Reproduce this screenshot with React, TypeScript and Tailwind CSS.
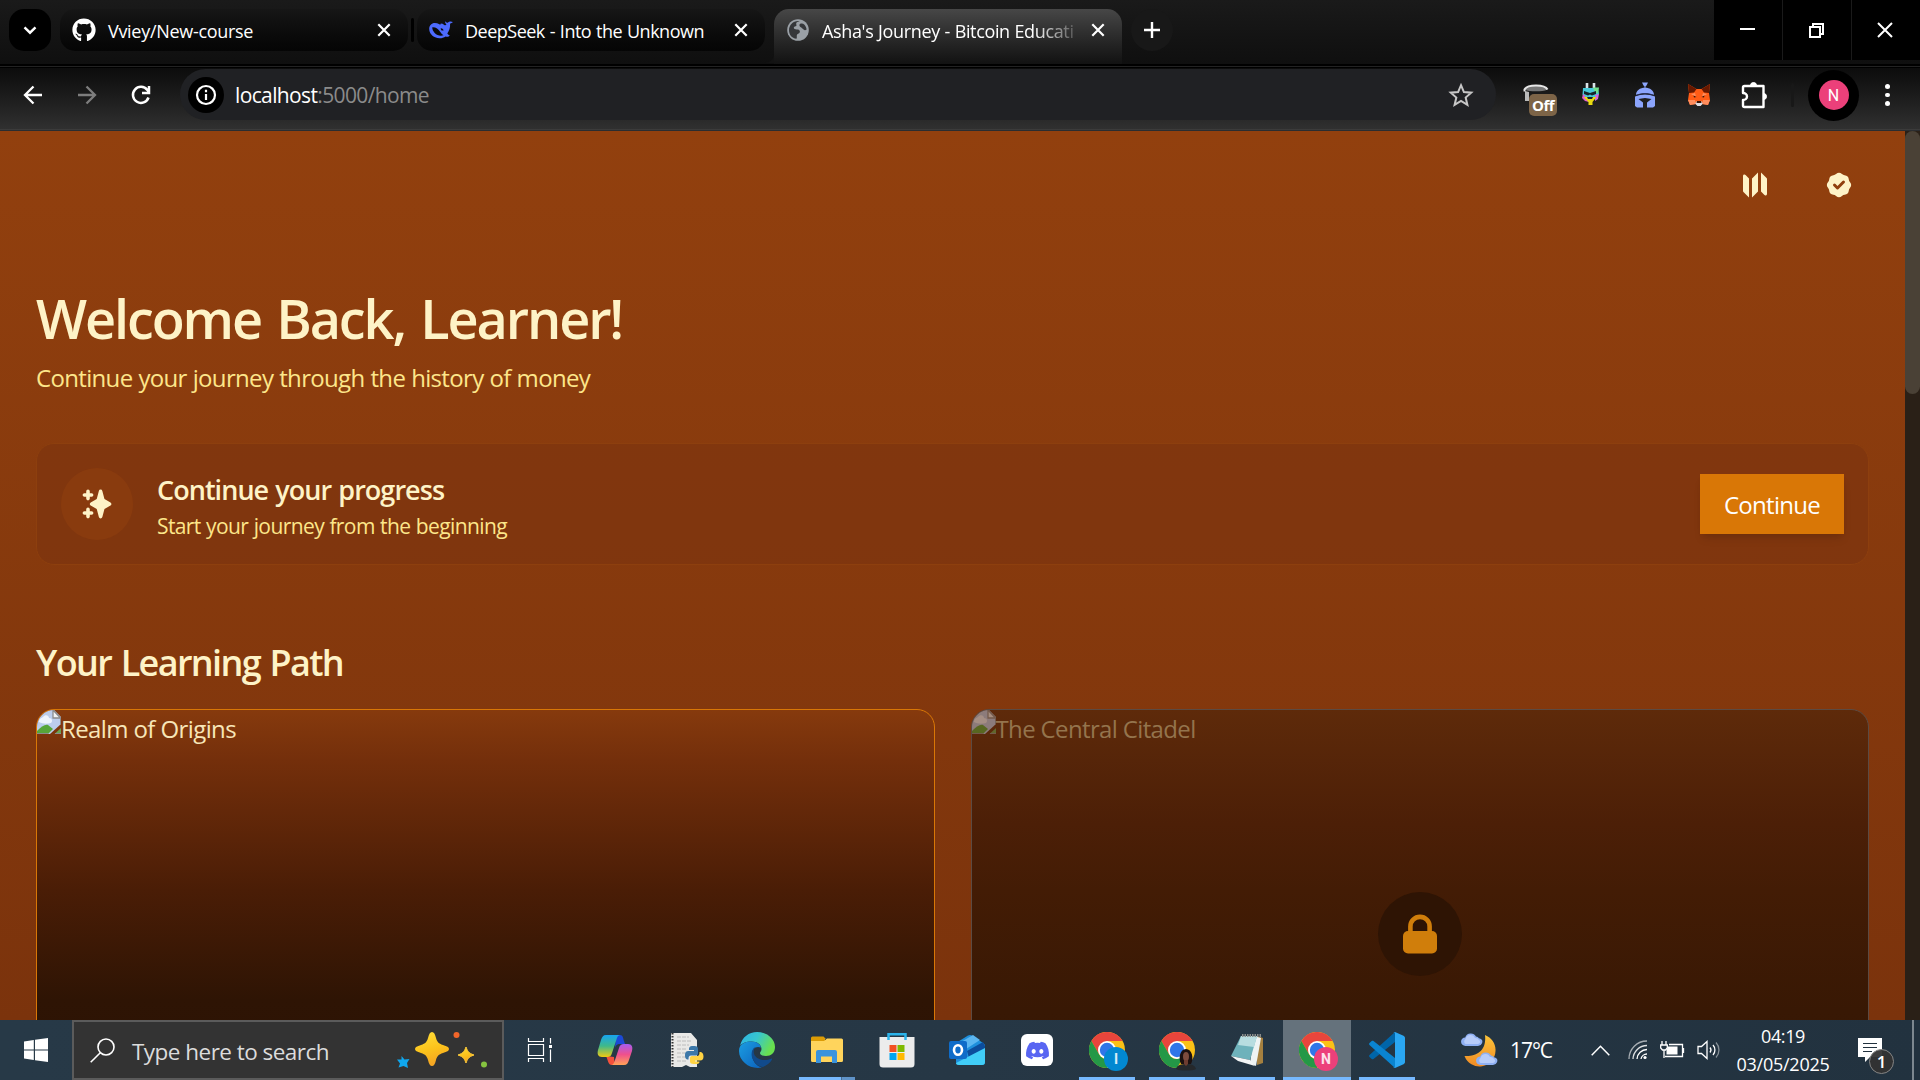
import React from "react";
import { FaGithub } from "react-icons/fa";
import { FaDiscord } from "react-icons/fa6";

type IconProps = { className?: string };

const CloseIcon = ({ className = "" }: IconProps) => (
  <svg className={className} width="24" height="24" viewBox="0 0 24 24" fill="none" stroke="#fff" strokeWidth="2.2">
    <path d="M6.3 6.3l11.4 11.4M17.7 6.3L6.3 17.7" />
  </svg>
);

const DeepSeekIcon = () => (
  <svg width="24" height="24" viewBox="0 0 24 24" fill="none">
    <path
      d="M23.7 4.1c-.5 1-1.500 1.400-2.300 1.500-.2 0-.3.1-.3.3.2 3.500-.8 6.700-2.800 9.600.7.9 1.500 1.500 2.500 1.900-.9 1.300-2.600 1.700-4.200 1-2.800 2-6.900 2.500-10.500.8C1.500 17 .1 13.500.2 9.900c.4-2 1.500-3.700 3.300-4.500 2.300-.9 4.700-.3 6.900.9.8.5 1.500 0 1.300-.8 1.300 0 2.500.5 3.600 1.400.8.6 1.700.4 2.200-.4-1-.8-1.500-2-1.300-3.300.6.900 1.400 1.500 2.500 1.600.8-.8 1.900-1.300 3.100-1.300.7 0 1.200.3 1.900.6z"
      fill="#4d6bfe"
    />
    <path d="M3.300 9.300c3.400-.3 5.900 1.700 8 4.700 1 1.500 2 2.600 3.200 3.300-3.100 1-6.500.1-8.800-2.300-1.600-1.700-2.500-3.700-2.400-5.700z" fill="#0a0a0a" />
    <path d="M11.600 10.200c1.200-.3 2.500.5 3 2.200-.8.4-2 .2-2.500-.4z" fill="#0a0a0a" />
  </svg>
);

const GlobeIcon = () => (
  <svg width="24" height="24" viewBox="0 0 24 24">
    <circle cx="12" cy="12" r="10.800" fill="#9aa0a6" />
    <path
      d="M13.800 3.300c-2.800.2-4 1.700-3.500 3.200.6 1.500-.4 1.700-1.500 2.100-1.300.5-1.300 1.800-.3 2.300 1.300.6 3.200.1 4.300.9 1.200.9 1.500 2.100.6 3.200-.9 1-2.500 1-2.600 2.500-.1 1 .3 2.300-.3 3.300C5.700 20.200 3 16.500 3 12.200 3 7.200 7 3 12 3zM14.200 5.800c1.500-.6 3-.3 4 .6 1.200 1.200 2.200 3 2.400 5-1.200 1.200-2.800.8-3.600-.3-.7-1-2-1.400-2.900-2.300-.9-.9-.9-2.400.1-3z"
      fill="#35373a"
    />
  </svg>
);

function Tab({ icon, title, className, titleClass }: { icon: React.ReactNode; title: string; className: string; titleClass: string }) {
  return (
    <div className={`flex h-[42px] w-[348px] shrink-0 items-center pl-3 ${className}`}>
      <span className="flex w-9 shrink-0">{icon}</span>
      <span className={`w-[252px] pt-[2px] text-[18px] leading-[26px] whitespace-nowrap text-white ${titleClass}`}>{title}</span>
      <CloseIcon className="ml-3 shrink-0" />
    </div>
  );
}

function TabStrip() {
  return (
    <div className="flex h-[64px] items-start bg-linear-to-b from-[#1a1a1a] to-[#0f0f0f]">
      <div className="mt-[9px] ml-[9px] flex h-[42px] w-[42px] items-center justify-center rounded-[15px] bg-black">
        <svg width="24" height="24" viewBox="0 0 24 24" fill="none" stroke="#fff" strokeWidth="2.400">
          <path d="M6.500 9.300l5.500 5.400 5.500-5.400" />
        </svg>
      </div>
      <Tab
        className="mt-[9px] ml-[9px] rounded-[15px] bg-linear-to-b from-[#161616] to-[#050505]"
        icon={<FaGithub className="h-6 w-6 text-white" />}
        title="Vviey/New-course"
        titleClass="tracking-[-0.3px]"
      />
      <div className="mt-[18px] ml-[3px] h-6 w-[3px] rounded bg-black" />
      <Tab
        className="mt-[9px] ml-[3px] rounded-[15px] bg-linear-to-b from-[#161616] to-[#050505]"
        icon={<DeepSeekIcon />}
        title="DeepSeek - Into the Unknown"
        titleClass="tracking-[-0.5px] [word-spacing:0.7px]"
      />
      <div className="mt-[9px] flex items-end">
        <svg width="9" height="9" viewBox="0 0 9 9" className="mb-[1px]">
          <path d="M9 0v9H0A9 9 0 0 0 9 0z" fill="#131313" />
        </svg>
        <div className="h-[55px] rounded-t-[15px] bg-linear-to-b from-[#474747] to-[#121212]">
          <Tab
            className=""
            icon={<GlobeIcon />}
            title="Asha's Journey - Bitcoin Educati"
            titleClass="tracking-[-0.36px] [word-spacing:0.4px] [mask-image:linear-gradient(to_right,#000_84%,rgba(0,0,0,0.2)_100%)]"
          />
        </div>
      </div>
      <div className="mt-[9px] ml-[9px] flex h-[42px] w-[42px] items-center justify-center rounded-full bg-[#181818]">
        <svg width="24" height="24" viewBox="0 0 24 24" stroke="#fff" strokeWidth="2.400">
          <path d="M12 4v16M4 12h16" />
        </svg>
      </div>
      <div className="ml-auto flex h-[60px] gap-px bg-[#1a1a1a]">
        <div className="flex w-[68px] items-center justify-center bg-black pr-[2px]">
          <div className="mt-[-2px] h-[2px] w-[15px] bg-white" />
        </div>
        <div className="flex w-[68px] items-center justify-center bg-black pr-[2px]">
          <svg width="15" height="15" viewBox="0 0 15 15" fill="none" stroke="#fff" strokeWidth="2">
            <path d="M1 4h10v10H1zM4 4V1h10v10h-3" />
          </svg>
        </div>
        <div className="flex w-[68px] items-center justify-center bg-black pr-[2px]">
          <svg width="16" height="16" viewBox="0 0 16 16" fill="none" stroke="#fff" strokeWidth="2">
            <path d="M1 1l14 14M15 1L1 15" />
          </svg>
        </div>
      </div>
    </div>
  );
}

function Toolbar() {
  return (
    <div className="flex h-[67px] flex-col border-b border-[#2b2d30] bg-[#0a0a0a]">
      <div className="h-[2px] bg-black" />
      <div className="h-px bg-[#222]" />
      <div className="h-px bg-black" />
      <div className="flex h-[62px] items-start border-b border-[#3b3b3b] bg-linear-to-b from-[#0c0c0c] to-[#303030] pt-px">
        <div className="flex h-[52px] w-[180px] items-center pl-[21px]">
          <svg width="24" height="24" viewBox="0 0 24 24" fill="none" stroke="#fff" strokeWidth="2.300">
            <path d="M21 12H4.500M12.500 3.500L4 12l8.500 8.500" />
          </svg>
          <svg className="ml-[30px]" width="24" height="24" viewBox="0 0 24 24" fill="none" stroke="#7d7d7d" strokeWidth="2.300">
            <path d="M3 12h16.500M11.500 3.500L20 12l-8.500 8.500" />
          </svg>
          <svg className="ml-[30px]" width="24" height="24" viewBox="0 0 24 24" fill="none" stroke="#fff" strokeWidth="2.500">
            <path d="M19.500 14.500A8 8 0 1 1 18.300 7L20 9M20 3v7h-7" />
          </svg>
        </div>
        <div className="flex h-[51px] w-[1316px] items-center rounded-full bg-[#202124] pl-[8px]">
          <div className="flex h-9 w-9 items-center justify-center rounded-full bg-black">
            <svg width="24" height="24" viewBox="0 0 24 24" fill="none" stroke="#fff" strokeWidth="2.200">
              <circle cx="12" cy="12" r="9" />
              <path d="M12 11v6M12 6.800v2.400" />
            </svg>
          </div>
          <span className="ml-[11px] text-[21px] leading-7 tracking-[-0.63px] text-white">
            localhost<span className="text-[#8b8b8b]">:5000/home</span>
          </span>
          <svg className="mr-[21px] ml-auto" width="28" height="28" viewBox="0 0 24 24" fill="none" stroke="#c7c7c7" strokeWidth="1.700">
            <path d="M12 3.600l2.500 5.900 6.300.5-4.800 4.200 1.500 6.300-5.500-3.400-5.500 3.400L8 14.200 3.200 10l6.300-.5z" />
          </svg>
        </div>
        <div className="flex h-[52px] items-center">
          <div className="relative ml-[27px] h-7 w-9">
            <svg width="28" height="28" viewBox="0 0 28 28" fill="none">
              <path d="M2 10v10h4v-9z" fill="#b9b9b9" />
              <path d="M1.500 8.500C3 5.500 8 4.500 13 4.500s10 1 11.500 4c-3 1.500-7 1.800-11.500 1.800S4 10 1.500 8.500z" fill="#777" />
              <path d="M1.500 10.500V8.500C3 5.500 8 4.500 13 4.500s10 1 11.500 4" stroke="#e8e8e8" strokeWidth="2" />
            </svg>
            <span className="absolute top-[13px] left-[6px] flex h-[22px] w-[28px] items-center justify-center rounded-[5px] bg-[#7d6447] text-[15px] font-bold tracking-[-0.5px] text-white">
              Off
            </span>
          </div>
          <svg className="ml-[22px]" width="20" height="24" viewBox="0 0 20 24">
            <path d="M6 0v6M13 0v6" stroke="#d9e3e8" strokeWidth="2.600" />
            <path d="M2 5h15l1 6-4 5H5l-3.500-4z" fill="#46c9d8" />
            <path d="M2 11l4 4 2 4-4-1-3-3z" fill="#e15ad0" />
            <path d="M12 4.500h6l-1 6-3-1z" fill="#6fe08b" />
            <path d="M14 12l4-1-1 5-3 2z" fill="#d267e0" />
            <path d="M2.500 14h13l-4 5v3h-4v-3z" fill="#e8d911" />
            <path d="M3 8l6 2 6-2v3l-4 1.500-2-1-2 1-4-1.500zM6 14h6l-1 2H7z" fill="#16232b" />
          </svg>
          <svg className="ml-[33px]" width="22" height="26" viewBox="0 0 22 26" fill="#8ba4fb">
            <path d="M8 .5h6l-1.500 3-1 1v2h-1v-2l-1-1z" />
            <path d="M2 13C2 8.500 6 5.800 11 5.800S20 8.500 20 13c-3-1.300-6-1.800-9-1.800S5 11.700 2 13z" />
            <path d="M1 14.500c6.500-2.700 13.500-2.700 20 0V24l-2 1.500h-6v-5l4.500-3.500-6.500-1-6.500 1L9 20.500v5H3L1 24z" />
            <path d="M2 13.300c6-2.200 12-2.200 18 0" stroke="#26305c" strokeWidth=".8" fill="none" />
          </svg>
          <svg className="ml-[31px]" width="24" height="24" viewBox="0 0 24 24">
            <path d="M1 1l8.500 5h5L23 1l-1 9 1 7-2 5-6-1-1.500 2h-3L9 21l-6 1-2-5 1-7z" fill="#ff5c16" />
            <path d="M1 1l8.500 5-2.500 3.500L2 10zM23 1l-8.500 5 2.500 3.500 5 .5z" fill="#661800" />
            <path d="M1 17h7l1 4-6 1zM23 17h-7l-1 4 6 1zM4 11l4-1 1 4zM20 11l-4-1-1 4z" fill="#ff8d5d" />
            <path d="M9 18.500h6l.5 2.500-2 2h-3l-2-2z" fill="#d8dde4" />
            <path d="M6.500 12.500l3 1.500-2.500.5zM17.500 12.500l-3 1.500 2.500.5zM10 18h4l.5 2h-5z" fill="#3a1206" />
          </svg>
          <svg className="ml-[30px]" width="27" height="28" viewBox="0 0 27 28" fill="none">
            <path
              d="M3.500 5h19v21h-19a1.500 1.500 0 0 1-1.500-1.500V19c2 0 4-1.200 4-3.500S4 12 2 12V6.500A1.500 1.500 0 0 1 3.500 5z"
              stroke="#fff"
              strokeWidth="2.400"
              strokeLinejoin="round"
            />
            <path d="M9.500 4.500a3 3 0 0 1 6 0zM22.500 12.500a3 3 0 0 1 0 6z" fill="#fff" stroke="#fff" />
          </svg>
          <div className="ml-[23px] h-6 w-[3px] rounded bg-[#181818]" />
          <div className="ml-[14px] flex h-[51px] w-[51px] items-center justify-center rounded-full bg-black">
            <div className="flex h-[30px] w-[30px] items-center justify-center rounded-full bg-[#ec407a] pt-px font-[Roboto] text-[16px] text-white">N</div>
          </div>
          <div className="ml-[26px] flex flex-col gap-1">
            <i className="h-[4.5px] w-[4.5px] rounded-full bg-white" />
            <i className="h-[4.5px] w-[4.5px] rounded-full bg-white" />
            <i className="h-[4.5px] w-[4.5px] rounded-full bg-white" />
          </div>
        </div>
      </div>
    </div>
  );
}

const BrokenImage = () => (
  <svg width="24" height="24" viewBox="0 0 24 24" className="shrink-0">
    <path d="M0 0h17l7 7v7L13 24H0z" fill="#bccdec" />
    <path d="M2 12c0-4 3-4 4-5 2-3 6-2 6 1 3 0 4 3 2 5-4 1-8 1-12-1z" fill="#eef4fd" />
    <path d="M16 0l7.500 8H16z" fill="#f2f2f2" stroke="#8b8b8b" strokeWidth="1.300" />
    <path d="M0 24v-3c4-4 8-7 11-6l5 4-5 5z" fill="#57a639" />
    <path d="M17.500 24l6.500-6v6z" fill="#69a551" />
    <path d="M0 23.500h11M18 23.500h6M23.500 8v6" stroke="#8c8c8c" />
  </svg>
);

function Page() {
  return (
    <div className="flex h-[889px] overflow-hidden">
      <main className="h-full w-[1905px] bg-linear-to-b from-[#92400e] to-[#7b330c] px-9">
        <nav className="flex justify-end gap-[54px] pt-[39px] pr-[15px]">
          <svg width="30" height="30" viewBox="0 0 20 20" fill="#fef3c7">
            <path d="M12 1.586l-4 4v12.828l4-4V1.586zM3.707 3.293A1 1 0 002 4v10a1 1 0 00.293.707L6 18.414V5.586L3.707 3.293zM17.707 5.293L14 1.586v12.828l2.293 2.293A1 1 0 0018 16V6a1 1 0 00-.293-.707z" />
          </svg>
          <svg width="30" height="30" viewBox="0 0 20 20" fill="#fef3c7">
            <path
              fillRule="evenodd"
              clipRule="evenodd"
              d="M6.267 3.455a3.066 3.066 0 001.745-.723 3.066 3.066 0 013.976 0 3.066 3.066 0 001.745.723 3.066 3.066 0 012.812 2.812c.051.643.304 1.254.723 1.745a3.066 3.066 0 010 3.976 3.066 3.066 0 00-.723 1.745 3.066 3.066 0 01-2.812 2.812 3.066 3.066 0 00-1.745.723 3.066 3.066 0 01-3.976 0 3.066 3.066 0 00-1.745-.723 3.066 3.066 0 01-2.812-2.812 3.066 3.066 0 00-.723-1.745 3.066 3.066 0 010-3.976 3.066 3.066 0 00.723-1.745 3.066 3.066 0 012.812-2.812zm7.440 5.252a1 1 0 00-1.414-1.414L9 10.586 7.707 9.293a1 1 0 00-1.414 1.414l2 2a1 1 0 001.414 0l4-4z"
            />
          </svg>
        </nav>
        <h1 className="mt-[88px] text-[54px] leading-[60px] font-semibold tracking-[-2.1px] whitespace-nowrap text-[#fef3c7] [word-spacing:3.300px]">
          Welcome Back, Learner!
        </h1>
        <p className="mt-3 text-[24px] leading-9 tracking-[-0.67px] text-[#fde68a] [word-spacing:0.4px]">Continue your journey through the history of money</p>
        <section className="mt-[47px] flex h-[122px] items-center justify-between rounded-[18px] border border-[#8d3f0e] bg-[#7c340f]/60 px-6">
          <div className="flex items-center gap-6">
            <div className="flex h-[72px] w-[72px] items-center justify-center rounded-full bg-[#92400e]/50">
              <svg width="36" height="36" viewBox="0 0 20 20" fill="#fef3c7">
                <path
                  fillRule="evenodd"
                  clipRule="evenodd"
                  d="M5 2a1 1 0 011 1v1h1a1 1 0 010 2H6v1a1 1 0 01-2 0V6H3a1 1 0 010-2h1V3a1 1 0 011-1zm0 10a1 1 0 011 1v1h1a1 1 0 110 2H6v1a1 1 0 11-2 0v-1H3a1 1 0 110-2h1v-1a1 1 0 011-1zM12 2a1 1 0 01.967.744L14.146 7.200 17.500 9.134a1 1 0 010 1.732l-3.354 1.935-1.180 4.455a1 1 0 01-1.933 0L9.854 12.800 6.500 10.866a1 1 0 010-1.732l3.354-1.935 1.180-4.455A1 1 0 0112 2z"
                />
              </svg>
            </div>
            <div className="pt-[2px]">
              <h3 className="text-[27px] leading-[42px] font-semibold tracking-[-0.95px] text-[#fef3c7] [word-spacing:1px]">Continue your progress</h3>
              <p className="text-[21px] leading-[30px] tracking-[-0.6px] text-[#fde68a] [word-spacing:0.500px]">Start your journey from the beginning</p>
            </div>
          </div>
          <button className="h-[60px] w-36 bg-[#d97706] pt-[2px] text-[24px] tracking-[-0.7px] text-white shadow-[0_6px_9px_-1.500px_rgba(0,0,0,0.1),0_3px_6px_-3px_rgba(0,0,0,0.1)]">
            Continue
          </button>
        </section>
        <h2 className="mt-[74px] text-[36px] leading-[48px] font-semibold tracking-[-1.64px] text-[#fef3c7] [word-spacing:1.800px]">Your Learning Path</h2>
        <div className="mt-[22px] grid grid-cols-2 gap-9">
          <article className="h-[450px] overflow-hidden rounded-[18px] border border-[#d97706] bg-[linear-gradient(to_bottom,#863a0d_0px,#742f0b_50px,#4a1d06_180px,#2e1404_290px,#2a1203_450px)]">
            <div className="flex text-[24px] leading-[38px] tracking-[-0.6px] text-[#f7e6b8]">
              <BrokenImage />
              Realm of Origins
            </div>
          </article>
          <article className="relative h-[450px] overflow-hidden rounded-[18px] border border-[#5c4a42] bg-[linear-gradient(to_bottom,#5e2a0a_0px,#4c1f07_114px,#431c05_180px,#381804_300px,#341603_450px)]">
            <div className="flex text-[24px] leading-[38px] tracking-[-0.64px] text-[#94744d]">
              <span className="opacity-50">
                <BrokenImage />
              </span>
              The Central Citadel
            </div>
            <div className="absolute inset-0 flex items-center justify-center">
              <div className="flex h-[84px] w-[84px] items-center justify-center rounded-full bg-[#2e1404]">
                <svg width="48" height="48" viewBox="0 0 48 48" fill="none">
                  <path d="M14.400 22v-5.500a9.600 9.600 0 0 1 19.200 0V22" stroke="#d07e0b" strokeWidth="4.600" />
                  <rect x="7" y="21" width="34" height="22.500" rx="5" fill="#d07e0b" />
                </svg>
              </div>
            </div>
          </article>
        </div>
      </main>
      <div className="h-full w-[15px] bg-[#2a2017]">
        <div className="h-[263px] w-full rounded-full bg-[#4a4136]" />
      </div>
    </div>
  );
}

const TaskViewIcon = () => (
  <svg width="26" height="26" viewBox="0 0 26 26" fill="none" stroke="#fff" strokeWidth="1.200">
    <path d="M1.500 1v3.500h15V1M1.500 25v-3.500h15V25M1.500 7.500h15v11h-15zM23.500 1v5.500M23.500 12.500V25" />
    <path d="M22 8h3v3h-3z" fill="#fff" stroke="none" />
  </svg>
);

const CopilotIcon = () => (
  <svg width="36" height="32" viewBox="0 0 36 32">
    <defs>
      <linearGradient id="cpA" x1="0" y1="0" x2="0" y2="1">
        <stop offset="0" stopColor="#17a4f0" />
        <stop offset=".5" stopColor="#3fb98a" />
        <stop offset="1" stopColor="#f0cb12" />
      </linearGradient>
      <linearGradient id="cpB" x1="0" y1="0" x2="0" y2="1">
        <stop offset="0" stopColor="#a55cf0" />
        <stop offset=".5" stopColor="#f0508c" />
        <stop offset="1" stopColor="#ffa357" />
      </linearGradient>
    </defs>
    <path d="M19 1h4c3 0 3 3 4 6l1 3h-6c-3 0-4 4-4 4z" fill="#1b49d6" />
    <path d="M9 22l8 1c0 4 1 7 3 8h-5c-4 0-4-5-6-9z" fill="#f4513c" />
    <path d="M9 1h14c-2 0-3 2-4 6l-4 12c-1 3-2 4-5 4H5c-4 0-5-3-4-7L4 6c1-3 2-5 5-5z" fill="url(#cpA)" />
    <path d="M27 31H14c2 0 3-2 4-5l4-12c1-3 2-4 5-4h4c4 0 5 3 4 7l-3 9c-1 3-2 5-5 5z" fill="url(#cpB)" />
  </svg>
);

const PythonNoteIcon = () => (
  <svg width="34" height="36" viewBox="0 0 34 36">
    <path d="M1 1h20l6 7v27h-7l-4-2-4 2H1z" fill="#e9e9e7" />
    <path d="M2.500 1v34" stroke="#333" strokeWidth="2" strokeDasharray="1.500 1.500" />
    <path d="M7 5h12M7 9h14M7 13h12M7 17h9M7 21h8M7 25h10M7 29h10" stroke="#bcbcbc" strokeDasharray="4 1" />
    <path d="M23 14c5 0 5 1 5 4v3c0 2-1 2.500-3 2.500h-4c-2 0-2.500 1-2.500 4-3 0-3.500-2-3.500-4.500s1-4 3.500-4H24v-1h-5c0-3 .5-4 4-4z" fill="#3c78a9" />
    <path d="M25 32c-5 0-5-1-5-4v-2c0-1.500 1-2 3-2h4c2 0 2.500-1.500 2.500-4 3 0 4 2 4 4.500s-1 4-3.500 4H25v1h4.500c0 2-1 2.500-4.500 2.500z" fill="#ffd343" />
  </svg>
);

const EdgeIcon = () => (
  <svg width="36" height="36" viewBox="0 0 36 36">
    <defs>
      <linearGradient id="edA" x1="0" y1="0" x2="1" y2=".4">
        <stop offset="0" stopColor="#2bb2e8" />
        <stop offset=".5" stopColor="#37c6cf" />
        <stop offset="1" stopColor="#69e04e" />
      </linearGradient>
      <linearGradient id="edB" x1="0" y1="0" x2="1" y2="1">
        <stop offset="0" stopColor="#1b9de2" />
        <stop offset="1" stopColor="#0c62bd" />
      </linearGradient>
    </defs>
    <path d="M1 14C3 5 10 0 18 0c10 0 18 7 18 15 0 6-4 9-9 9-4 0-6-1.500-6-3 0-1 1.500-1.500 1.500-4 0-4-4-7.500-10-7.500C7 9.500 2.500 11.500 1 14z" fill="url(#edA)" />
    <path d="M0 19C0 12 6 9.500 12 9.500c6 0 9.500 3 10 6-6-2-9 2-9 7 0 6 4 11.500 10 13C12 38 0 30 0 19z" fill="url(#edB)" />
    <path d="M16 15c-3 2-4.500 7-2.500 11.500S20 35 24 35c4-1.500 7.500-4.500 9-7.500.3-.8-.3-1.200-1-.8-6 3-15 1-17-5-.6-2-.3-4.500 1-6.700z" fill="#114a8b" />
  </svg>
);

const ExplorerIcon = () => (
  <svg width="32" height="28" viewBox="0 0 32 28">
    <path d="M0 2a1.500 1.500 0 0 1 1.500-1.500h11L15 3h-1v4H0z" fill="#dc9c05" />
    <path d="M0 5h13l3-2.500h14.500A1.500 1.500 0 0 1 32 4v20.500a1.500 1.500 0 0 1-1.500 1.500h-29A1.500 1.500 0 0 1 0 24.500z" fill="#ffd45c" />
    <path d="M5 16a2 2 0 0 1 2-2h17a2 2 0 0 1 2 2v11h-5v-6.500H10V27H5z" fill="#3a93dd" />
  </svg>
);

const StoreIcon = () => (
  <svg width="36" height="36" viewBox="0 0 36 36">
    <path d="M9.500 6V2.200h17V6" fill="none" stroke="#2bb3ea" strokeWidth="2.500" />
    <path d="M.5 5h35v27a3.500 3.500 0 0 1-3.500 3.500H4A3.500 3.500 0 0 1 .5 32z" fill="#ececec" />
    <path d="M9.500 5v3M26.500 5v3" stroke="#2bb3ea" strokeWidth="2.500" />
    <path d="M10.500 13h7v7h-7z" fill="#f25022" />
    <path d="M18.500 13h7v7h-7z" fill="#7fba00" />
    <path d="M10.500 21h7v7h-7z" fill="#00a4ef" />
    <path d="M18.500 21h7v7h-7z" fill="#ffb900" />
  </svg>
);

const OutlookIcon = () => (
  <svg width="36" height="32" viewBox="0 0 36 32">
    <path d="M7 9L19 1.500c1.500-.8 2.500-.8 4 0L34 9c1.500 1 2 2 2 3v16a3 3 0 0 1-3 3H10a3 3 0 0 1-3-3z" fill="#1e8fdc" />
    <path d="M18 17L34 8l2 4v3L20 24z" fill="#0c4d9c" />
    <path d="M12 8l12-7 7 5-14 9z" fill="#5bb6f0" />
    <path d="M36 14v14a3 3 0 0 1-3 3H10c-2 0-3-1-3-2z" fill="#41cdf7" />
    <rect x="0" y="7" width="18" height="18" rx="2" fill="#0f6cc9" />
    <ellipse cx="9" cy="16" rx="4" ry="4.700" fill="none" stroke="#fff" strokeWidth="2.600" />
  </svg>
);

const ChromeIcon = () => (
  <svg width="36" height="36" viewBox="0 0 36 36">
    <circle cx="18" cy="18" r="18" fill="#fbc116" />
    <path d="M18 9h15.600A18 18 0 0 0 2.400 9l7.800 13.500z" fill="#e8453c" />
    <path d="M2.400 9a18 18 0 0 0 15.600 27l7.800-13.500L18 27a9 9 0 0 1-7.800-4.500z" fill="#249847" />
    <circle cx="18" cy="18" r="9" fill="#fff" />
    <circle cx="18" cy="18" r="7.200" fill="#2f76e8" />
  </svg>
);

const NotepadIcon = () => (
  <svg width="34" height="34" viewBox="0 0 34 34">
    <path d="M27 3l6 2v25l-6 2z" fill="#a5803f" />
    <path d="M24 3l7 2-5 28-6-3z" fill="#eef3f3" />
    <path d="M11 3l16 0-7 24L1 23z" fill="#6eb2bb" />
    <path d="M11 3l16 0-3 11-16-2z" fill="#b8dde0" />
    <path d="M1 23l19 4 5 6-17-5z" fill="#f4f6f6" />
    <path d="M12 2.500h19" stroke="#8a8d8a" strokeWidth="3" strokeDasharray="1.500 1" />
  </svg>
);

const VSCodeIcon = () => (
  <svg width="36" height="36" viewBox="0 0 36 36">
    <path d="M26 0v10L4.500 27c-.6.500-1.300.4-1.800 0L.5 25c-.6-.6-.6-1.500 0-2z" fill="#0065a9" />
    <path d="M26 36V26L4.500 9c-.6-.5-1.300-.4-1.800 0L.5 11c-.6.600-.6 1.500 0 2z" fill="#0a84d0" />
    <path d="M26 36c-1 .2-1.600 0-2.200-.6.900.8 2.200.2 2.200-1V1.600c0-1.200-1.300-1.800-2.200-1C24.400 0 25 0 26 0l8.500 3.800c.9.500 1.500 1.200 1.500 2.200v24c0 1-.6 1.700-1.500 2.200z" fill="#2aa7f3" />
  </svg>
);

function Slot({ children, running = false, active = false }: { children: React.ReactNode; running?: boolean; active?: boolean }) {
  return (
    <div className="flex h-[60px] w-[70px] flex-col items-center">
      <div className={`flex h-[57px] w-[68px] items-center justify-center pt-[3px] ${active ? "bg-[#65727c]" : ""}`}>{children}</div>
      {running && <div className={`h-[3px] bg-[#76b9ff] ${active ? "w-[68px]" : "w-14"}`} />}
    </div>
  );
}

function ChromeProfile({ badge }: { badge: React.ReactNode }) {
  return (
    <div className="relative">
      <ChromeIcon />
      <div className="absolute top-[15px] left-[15px]">{badge}</div>
    </div>
  );
}

function LetterBadge({ letter, className }: { letter: string; className: string }) {
  return <div className={`flex h-6 w-6 items-center justify-center rounded-full font-[Roboto] text-[14px] font-bold text-white/85 ${className}`}>{letter}</div>;
}

const PhotoBadge = () => (
  <svg width="24" height="24" viewBox="0 0 24 24">
    <path d="M7 17C4 11 6 2 12 2s8 9 5 15z" fill="#1c1110" />
    <path d="M2 22c1-4 5-5 10-5s9 1 10 5c-3 2-17 2-20 0z" fill="#25282b" />
    <ellipse cx="12" cy="9.500" rx="3" ry="4.500" fill="#7d4c3d" />
    <path d="M10 13h4v4l-2 2-2-2z" fill="#6e3d30" />
  </svg>
);

const Cloud = ({ x, y }: { x: number; y: number }) => (
  <g transform={`translate(${x} ${y})`}>
    <path d="M4.500 13a4.300 4.300 0 0 1-.3-8.600A6 6 0 0 1 15 3.600a4 4 0 0 1 3 1.700q4.500 1 3 5-1 2.700-4 2.700z" fill="#8fb0f3" />
    <path d="M4.500 11a3 3 0 0 1 0-5A5 5 0 0 1 14 5a4 4 0 0 1 4 2c2 1 1 4-1 4z" fill="#b7ccfa" />
  </g>
);

function Taskbar() {
  return (
    <footer className="flex h-[60px] items-center bg-linear-to-r from-[#273947] via-[#263745] to-[#22323f]">
      <div className="flex w-[72px] justify-center">
        <svg width="24" height="24" viewBox="0 0 24 24" fill="#fff">
          <path d="M0 3.400L9.800 2v9.500H0zM11 1.800L24 0v11.500H11zM0 12.500h9.800V22L0 20.600zM11 12.500h13V24l-13-1.800z" />
        </svg>
      </div>
      <div className="flex h-[60px] w-[432px] items-center border-2 border-[#5b5b5b] bg-[#333] pl-4">
        <svg width="25" height="25" viewBox="0 0 25 25" fill="none" stroke="#fff" strokeWidth="1.600">
          <circle cx="16" cy="9" r="8" />
          <path d="M10.300 14.700L.7 24.300" />
        </svg>
        <span className="mt-[3px] ml-[17px] text-[22.5px] tracking-[-0.53px] text-[#dcdcdc]">Type here to search</span>
        <svg className="mr-[14px] ml-auto" width="92" height="38" viewBox="0 0 92 38">
          <defs>
            <linearGradient id="spk" x1="0" y1="0" x2=".3" y2="1">
              <stop offset="0" stopColor="#ffdf3a" />
              <stop offset=".6" stopColor="#fcc21b" />
              <stop offset="1" stopColor="#f5a623" />
            </linearGradient>
          </defs>
          <path d="M36 1c2 0 3 2 4 6 1.200 4 2.500 5.500 7 7 4 1.300 6 2.200 6 4s-2 2.700-6 4c-4.500 1.500-5.800 3-7 7-1 4-2 6-4 6s-3-2-4-6c-1.200-4-2.500-5.500-7-7-4-1.300-6-2.200-6-4s2-2.700 6-4c4.500-1.500 5.800-3 7-7 1-4 2-6 4-6z" fill="url(#spk)" />
          <path d="M70 16c1.500 3.500 2 6 8 8-6 2-6.500 4.500-8 8-1.500-3.500-2-6-8-8 6-2 6.500-4.500 8-8z" fill="url(#spk)" stroke="#fcc93a" strokeLinejoin="round" />
          <path d="M5.500 25l3 3.500 5-.5-2.500 4 1 5-4.500-2-5 1.500 1.500-4-3-4 4.500 0z" fill="#0fa7ee" />
          <circle cx="60.500" cy="4" r="3" fill="#f2662a" />
          <circle cx="88" cy="33.500" r="3" fill="#86c440" />
        </svg>
      </div>
      <div className="flex w-[78px] justify-center pr-[6px]">
        <TaskViewIcon />
      </div>
      <div className="flex">
        <Slot>
          <div className="pr-1">
            <CopilotIcon />
          </div>
        </Slot>
        <Slot><PythonNoteIcon /></Slot>
        <Slot><EdgeIcon /></Slot>
        <div className="flex h-[60px] w-[70px] flex-col items-center">
          <div className="flex h-[57px] items-center pt-[3px]">
            <ExplorerIcon />
          </div>
          <div className="flex h-[3px]">
            <i className="w-[42px] bg-[#76b9ff]" />
            <i className="w-[14px] border-l border-[#4b6e92] bg-[#5f93c8]" />
          </div>
        </div>
        <Slot><StoreIcon /></Slot>
        <Slot><OutlookIcon /></Slot>
        <Slot>
          <div className="flex h-8 w-8 items-center justify-center rounded-[6px] bg-white">
            <FaDiscord className="h-[25px] w-[25px] text-[#5865f2]" />
          </div>
        </Slot>
        <Slot running><ChromeProfile badge={<LetterBadge letter="I" className="bg-[#0288d1]" />} /></Slot>
        <Slot running><ChromeProfile badge={<PhotoBadge />} /></Slot>
        <Slot running><NotepadIcon /></Slot>
        <Slot running active><ChromeProfile badge={<LetterBadge letter="N" className="bg-[#ec407a]" />} /></Slot>
        <Slot running><VSCodeIcon /></Slot>
      </div>
      <div className="ml-[39px] flex items-center">
        <svg width="37" height="34" viewBox="0 0 37 34">
          <defs>
            <linearGradient id="moon" x1="0" y1="0" x2="0" y2="1">
              <stop offset="0" stopColor="#fcc53a" />
              <stop offset="1" stopColor="#f08a24" />
            </linearGradient>
          </defs>
          <path d="M24 2c7 3 11 9 10.500 16A16 16 0 0 1 3.500 23C14 24 26 19 24 2z" fill="url(#moon)" />
          <Cloud x={0} y={0} />
          <Cloud x={15} y={19} />
        </svg>
        <span className="mt-[2px] ml-3 w-[46px] text-[21px] tracking-[-1.050px] whitespace-nowrap text-white">17°C</span>
        <svg className="ml-[35px]" width="19" height="11" viewBox="0 0 19 11" fill="none" stroke="#fff" strokeWidth="1.500">
          <path d="M.7 10.200l8.800-9 8.800 9" />
        </svg>
        <svg className="ml-[18px]" width="20" height="20" viewBox="0 0 20 20" fill="none" stroke="#fff" strokeWidth="1.300">
          <path d="M13 19a6 6 0 0 1 6-5" />
          <path d="M9 19a10 10 0 0 1 10-9.500" />
          <path d="M5 19A14 14 0 0 1 19 5.500" opacity=".85" />
          <path d="M1 19A18 18 0 0 1 19 1" opacity=".6" />
          <circle cx="17" cy="17.500" r="1.600" fill="#fff" stroke="none" />
        </svg>
        <svg className="ml-[12px]" width="25" height="18" viewBox="0 0 25 18" fill="none" stroke="#fff" strokeWidth="1.300">
          <path d="M9 3.500h13.500v12H5M23.500 7v5" />
          <path d="M8 5.500h9.500v8H6.500V9z" fill="#fff" stroke="none" />
          <path d="M2 0v4M6 0v4M.7 4h6.600v3L5.500 9h-3L.7 7zM4 9v8" />
        </svg>
        <svg className="ml-[12px]" width="24" height="20" viewBox="0 0 24 20" fill="none" stroke="#fff" strokeWidth="1.300">
          <path d="M1 6.500h3.500L10 1.500v17l-5.500-5H1z" />
          <path d="M13 7.500a4 4 0 0 1 0 5" />
          <path d="M16 5a7.500 7.500 0 0 1 0 10" />
          <path d="M19 2.500a11 11 0 0 1 0 15" opacity=".45" />
        </svg>
        <div className="ml-[13px] flex w-[98px] flex-col items-center text-[18px] leading-7 whitespace-nowrap text-white">
          <span className="tracking-[-0.38px]">04:19</span>
          <span className="tracking-[-0.25px]">03/05/2025</span>
        </div>
        <div className="relative ml-[26px] h-6 w-6">
          <svg width="24" height="24" viewBox="0 0 24 24">
            <path d="M0 0h24v19H12l-5 5v-5H0z" fill="#fff" />
            <path d="M5 5.500h14M5 9.500h14M5 13.500h9" stroke="#22323f" strokeWidth="1.200" />
          </svg>
          <span className="absolute top-[11px] left-[11px] flex h-[25px] w-[25px] items-center justify-center rounded-full border border-[#858585] bg-[#333]/95 text-[17px] font-semibold text-white">
            1
          </span>
        </div>
        <div className="ml-[30px] h-[60px] w-[2px] bg-[#7d8890]" />
      </div>
    </footer>
  );
}

export default function App() {
  return (
    <div className="h-[1080px] w-[1920px] overflow-hidden bg-black font-['Open_Sans','Noto_Sans',sans-serif]">
      <TabStrip />
      <Toolbar />
      <Page />
      <Taskbar />
    </div>
  );
}
